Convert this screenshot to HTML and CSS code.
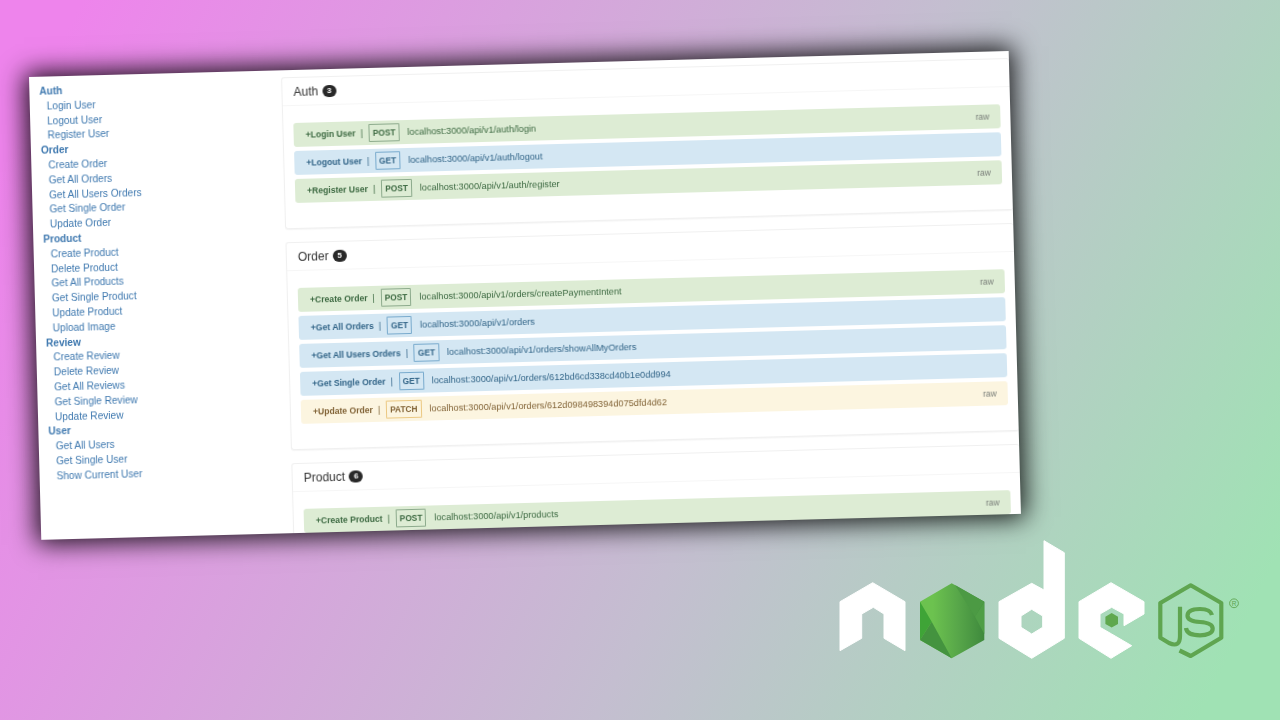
FILE: index.html
```html
<!DOCTYPE html>
<html lang="en">

<head>
    <meta charset="UTF-8">
    <meta name="viewport" content="width=device-width, initial-scale=1.0">
    <title>E-Commerce API docs</title>
    <link rel="stylesheet" href="styles.css">
</head>

<body>
    <div class="docs-window">
        <aside class="side-nav">
            <a class="nav-group">Auth</a>
            <a class="nav-item">Login User</a>
            <a class="nav-item">Logout User</a>
            <a class="nav-item">Register User</a>
            <a class="nav-group">Order</a>
            <a class="nav-item">Create Order</a>
            <a class="nav-item">Get All Orders</a>
            <a class="nav-item">Get All Users Orders</a>
            <a class="nav-item">Get Single Order</a>
            <a class="nav-item">Update Order</a>
            <a class="nav-group">Product</a>
            <a class="nav-item">Create Product</a>
            <a class="nav-item">Delete Product</a>
            <a class="nav-item">Get All Products</a>
            <a class="nav-item">Get Single Product</a>
            <a class="nav-item">Update Product</a>
            <a class="nav-item">Upload Image</a>
            <a class="nav-group">Review</a>
            <a class="nav-item">Create Review</a>
            <a class="nav-item">Delete Review</a>
            <a class="nav-item">Get All Reviews</a>
            <a class="nav-item">Get Single Review</a>
            <a class="nav-item">Update Review</a>
            <a class="nav-group">User</a>
            <a class="nav-item">Get All Users</a>
            <a class="nav-item">Get Single User</a>
            <a class="nav-item">Show Current User</a>
        </aside>

        <main class="panels">
            <section class="panel">
                <h2 class="panel-head">Auth <span class="count">3</span></h2>
                <div class="panel-body">
                    <div class="req post">
                        <span class="req-name">+Login User</span><span class="sep">|</span>
                        <span class="method">POST</span>
                        <span class="url">localhost:3000/api/v1/auth/login</span>
                        <span class="raw">raw</span>
                    </div>
                    <div class="req get">
                        <span class="req-name">+Logout User</span><span class="sep">|</span>
                        <span class="method">GET</span>
                        <span class="url">localhost:3000/api/v1/auth/logout</span>
                    </div>
                    <div class="req post">
                        <span class="req-name">+Register User</span><span class="sep">|</span>
                        <span class="method">POST</span>
                        <span class="url">localhost:3000/api/v1/auth/register</span>
                        <span class="raw">raw</span>
                    </div>
                </div>
            </section>

            <section class="panel">
                <h2 class="panel-head">Order <span class="count">5</span></h2>
                <div class="panel-body">
                    <div class="req post">
                        <span class="req-name">+Create Order</span><span class="sep">|</span>
                        <span class="method">POST</span>
                        <span class="url">localhost:3000/api/v1/orders/createPaymentIntent</span>
                        <span class="raw">raw</span>
                    </div>
                    <div class="req get">
                        <span class="req-name">+Get All Orders</span><span class="sep">|</span>
                        <span class="method">GET</span>
                        <span class="url">localhost:3000/api/v1/orders</span>
                    </div>
                    <div class="req get">
                        <span class="req-name">+Get All Users Orders</span><span class="sep">|</span>
                        <span class="method">GET</span>
                        <span class="url">localhost:3000/api/v1/orders/showAllMyOrders</span>
                    </div>
                    <div class="req get">
                        <span class="req-name">+Get Single Order</span><span class="sep">|</span>
                        <span class="method">GET</span>
                        <span class="url">localhost:3000/api/v1/orders/612bd6cd338cd40b1e0dd994</span>
                    </div>
                    <div class="req patch">
                        <span class="req-name">+Update Order</span><span class="sep">|</span>
                        <span class="method">PATCH</span>
                        <span class="url">localhost:3000/api/v1/orders/612d098498394d075dfd4d62</span>
                        <span class="raw">raw</span>
                    </div>
                </div>
            </section>

            <section class="panel">
                <h2 class="panel-head">Product <span class="count">6</span></h2>
                <div class="panel-body">
                    <div class="req post">
                        <span class="req-name">+Create Product</span><span class="sep">|</span>
                        <span class="method">POST</span>
                        <span class="url">localhost:3000/api/v1/products</span>
                        <span class="raw">raw</span>
                    </div>
                </div>
            </section>
        </main>
    </div>

    <svg class="node-logo" viewBox="0 0 440 140" width="440" height="140" role="img" aria-label="Node.js">
        <defs>
            <linearGradient id="hex-fill" x1="100" y1="0" x2="164" y2="0" gradientUnits="userSpaceOnUse">
                <stop offset="0.2" stop-color="#6cc24f" />
                <stop offset="0.6" stop-color="#57a649" />
                <stop offset="1" stop-color="#3f8a3d" />
            </linearGradient>
        </defs>

        <!-- n -->
        <path class="white-part" d="M52.7 52.7 L85 71.7 V120.7 L64 108.3 V84 L53.3 77.3 L41.7 84 V108.3 L20 120.7 V71.7 Z" />

        <!-- green hexagon -->
        <path fill="url(#hex-fill)" d="M131.7 53.3 L164.3 71.7 V110 L131.7 128.3 L100 110 V71.7 Z" />
        <path fill="#3fa437" d="M100 71.7 L111.7 91.7 L100 110 Z" />
        <path fill="#44933f" d="M100 110 L111.7 91.7 L131.7 128.3 Z" />
        <path fill="#4c9a44" d="M135 55 L164.3 71.7 L155 86.7 Z" />
        <path fill="#4f9e46" d="M155 86.7 L164.3 71.7 V104 Z" />

        <!-- d -->
        <path class="white-part" fill-rule="evenodd" d="M224 10.7 L244.3 22.7 V108.3 L211.7 128.3 L179 108.3 V71.7 L211.7 53.3 L224 60 Z M211.7 79.3 L201 86 V97.3 L211.7 104 L222.7 97.3 V86 Z" />

        <!-- e -->
        <path class="white-part" d="M291 52.7 L324 71.7 V84 L304 95.7 V84 L291.7 77.3 L280 84 V97.3 L291.7 104 L311.7 115.7 L291 128.3 L259 108.3 V71.7 Z" />
        <path fill="#5fa84e" d="M291.7 83 L298 86.8 V94 L291.7 97.6 L285.4 94 V86.8 Z" />

        <!-- js mark -->
        <path class="js-line" d="M359.5 120.5 L370.7 126 L401.3 107.7 V73 L370.7 55.3 L340.3 73 V107.7 L349 113 Q360 118 360 106 V76.7" />
        <path class="js-line" d="M392 85 C391 81 386 79 380 79 C372 79 367.5 81.5 367.5 85.7 C367.5 90 372 91.5 380 92 C388 92.5 392.7 94.5 392.7 98.7 C392.7 103 387 105.3 380 105.3 C372 105.3 366.5 103 366 98" />
        <circle class="reg-ring" cx="414" cy="73.3" r="4.4" />
        <text class="reg-mark" x="414" y="75.6" text-anchor="middle">R</text>
    </svg>
</body>

</html>
```

FILE: styles.css
```css
html,
body {
    margin: 0;
    height: 100%;
}

body {
    position: relative;
    width: 1280px;
    height: 720px;
    overflow: hidden;
    font-family: "Liberation Sans", Arial, sans-serif;
    background: linear-gradient(116deg, rgb(238, 132, 236) 5%, rgb(196, 190, 208) 58%, rgb(160, 226, 180) 95%);
}

/* the screenshot of the docs, lying tilted on the background */
.docs-window {
    position: absolute;
    left: 29px;
    top: 77px;
    width: 980px;
    height: 463px;
    display: grid;
    grid-template-columns: 252px 1fr;
    overflow: hidden;
    background-color: white;
    transform: rotate(-1.52deg);
    transform-origin: 0 0;
    box-shadow: 0 0 24px 4px rgba(0, 0, 0, 0.9);
    filter: blur(0.55px);
}

.side-nav {
    padding-top: 8px;
    font-size: 10.1px;
    line-height: 14.8px;
    color: rgb(62, 120, 175);
}

.nav-group {
    display: block;
    padding-left: 10px;
    font-weight: bold;
}

.nav-item {
    display: block;
    padding-left: 17px;
}

.panels {
    display: flex;
    flex-direction: column;
    gap: 13px;
    padding-top: 7px;
}

.panel {
    border: 1px solid rgb(240, 240, 240);
    border-right: 0;
    border-radius: 3px;
    box-shadow: 0 1px 1px rgba(0, 0, 0, 0.04);
    flex-shrink: 0;
}

.panel-head {
    display: flex;
    align-items: center;
    gap: 4px;
    height: 27px;
    margin: 0;
    padding-left: 11px;
    font-size: 12px;
    font-weight: normal;
    color: rgb(51, 51, 51);
    border-bottom: 1px solid rgb(246, 246, 246);
}

.count {
    width: 14px;
    height: 12px;
    border-radius: 6px;
    background-color: rgb(40, 40, 40);
    color: white;
    font-size: 8px;
    font-weight: bold;
    line-height: 12px;
    text-align: center;
}

.panel-body {
    display: flex;
    flex-direction: column;
    gap: 4px;
    padding: 17px 10px 25px 10px;
}

.req {
    display: flex;
    align-items: center;
    height: 24px;
    padding: 0 11px 0 12px;
    border-radius: 3px;
    font-size: 8.6px;
}

.req-name {
    font-weight: bold;
}

.sep {
    margin: 0 6px 0 5px;
}

.method {
    padding: 0 3px;
    height: 16px;
    line-height: 16px;
    font-size: 8.3px;
    font-weight: bold;
    border: 1px solid currentColor;
    margin-right: 8px;
}

.url {
    font-size: 9.2px;
}

.raw {
    margin-left: auto;
    color: rgb(120, 125, 120);
}

.post {
    background-color: rgb(221, 236, 212);
    color: rgb(60, 105, 65);
}

.post .method {
    border-color: rgb(140, 170, 140);
}

.get {
    background-color: rgb(212, 231, 243);
    color: rgb(49, 100, 135);
}

.get .method {
    border-color: rgb(120, 170, 205);
}

.patch {
    background-color: rgb(252, 245, 224);
    color: rgb(130, 100, 55);
}

.patch .method {
    border-color: rgb(235, 200, 130);
}

.node-logo {
    position: absolute;
    left: 820px;
    top: 530px;
}

.white-part {
    fill: white;
    stroke: white;
    stroke-width: 1;
    stroke-linejoin: round;
}

.js-line {
    fill: none;
    stroke: rgb(95, 165, 80);
    stroke-width: 4.2;
    stroke-linejoin: round;
}

.reg-ring {
    fill: none;
    stroke: rgb(95, 165, 80);
    stroke-width: 0.9;
}

.reg-mark {
    font-size: 6.5px;
    fill: rgb(95, 165, 80);
}
```
